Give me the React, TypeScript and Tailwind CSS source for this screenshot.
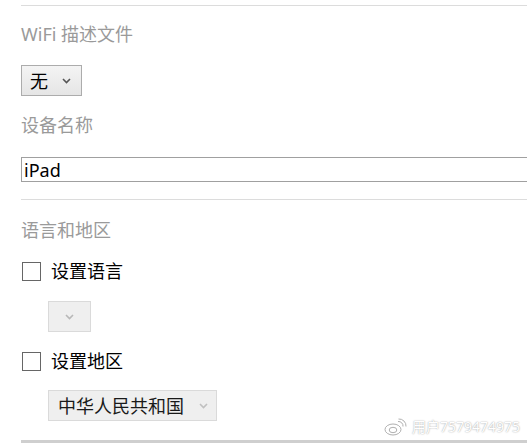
import React from "react";

const Chevron = ({ color }: { color: string }) => (
  <svg width="9" height="6" viewBox="0 0 9 6" fill="none">
    <path d="M1 1l3.5 3.5L8 1" stroke={color} strokeWidth="1.6" />
  </svg>
);

const Checkbox = () => (
  <div className="w-[19px] h-[19px] border border-[#666] bg-white shrink-0" />
);

export default function App() {
  return (
    <div
      className="relative w-[527px] h-[443px] overflow-hidden bg-white pl-[21px]"
      style={{ fontFamily: '"Noto Sans", "Noto Sans CJK SC", sans-serif' }}
    >
      <div className="mt-[5px] h-px bg-[#dcdcdc]" />

      <div className="mt-[16px] text-[18px] leading-[24px] text-[#9a9a9a]">WiFi 描述文件</div>

      <div className="mt-[19px] w-[61px] h-[31px] border border-[#acacac] bg-gradient-to-b from-[#f4f4f4] to-[#e5e5e5] flex items-center pl-[8px] gap-[14px] text-[18px] text-black">
        <span className="leading-[24px]">无</span>
        <Chevron color="#555" />
      </div>

      <div className="mt-[17px] text-[18px] leading-[24px] text-[#9a9a9a]">设备名称</div>

      <div className="mt-[20px] h-[25px] w-[520px] border border-[#a0a0a0] flex items-center pl-[2px] text-[18px] text-black">
        <span className="leading-[24px]">iPad</span>
      </div>

      <div className="mt-[17px] h-px bg-[#dcdcdc]" />

      <div className="mt-[18px] text-[18px] leading-[24px] text-[#9a9a9a]">语言和地区</div>

      <div className="mt-[17px] flex items-center gap-[10px] ml-[1px] h-[24px] text-[18px] text-black">
        <Checkbox />
        <span className="leading-[24px]">设置语言</span>
      </div>

      <div className="mt-[18px] ml-[27px] w-[43px] h-[31px] border border-[#dadada] bg-[#efefef] flex items-center justify-center">
        <Chevron color="#b8b8b8" />
      </div>

      <div className="mt-[17px] flex items-center gap-[10px] ml-[1px] h-[24px] text-[18px] text-black">
        <Checkbox />
        <span className="leading-[24px]">设置地区</span>
      </div>

      <div className="mt-[17px] ml-[27px] w-[169px] h-[31px] border border-[#dadada] bg-[#efefef] flex items-center pl-[9px] pr-[8px] justify-between text-[18px] text-[#1a1a1a]">
        <span className="leading-[24px]">中华人民共和国</span>
        <Chevron color="#c0c0c0" />
      </div>

      <div className="mt-[19px] h-[3px] bg-[#cfcfcf]" />

      <div className="absolute right-[7px] bottom-[7px] flex items-center gap-[5px] text-[14px] leading-[18px] text-white [text-shadow:0_0_1.5px_#8a8a8a]">
        <svg width="24" height="18" viewBox="0 0 24 18" fill="none" stroke="#b0b0b0" strokeWidth="1">
          <ellipse cx="10" cy="11.5" rx="8" ry="5.5" />
          <ellipse cx="10" cy="12" rx="3.8" ry="2.7" />
          <path d="M15 3.5a4.5 4.5 0 0 1 5 5" />
          <path d="M15.5 1a7 7 0 0 1 7.5 7.5" />
        </svg>
        <span>用户7579474975</span>
      </div>
    </div>
  );
}
